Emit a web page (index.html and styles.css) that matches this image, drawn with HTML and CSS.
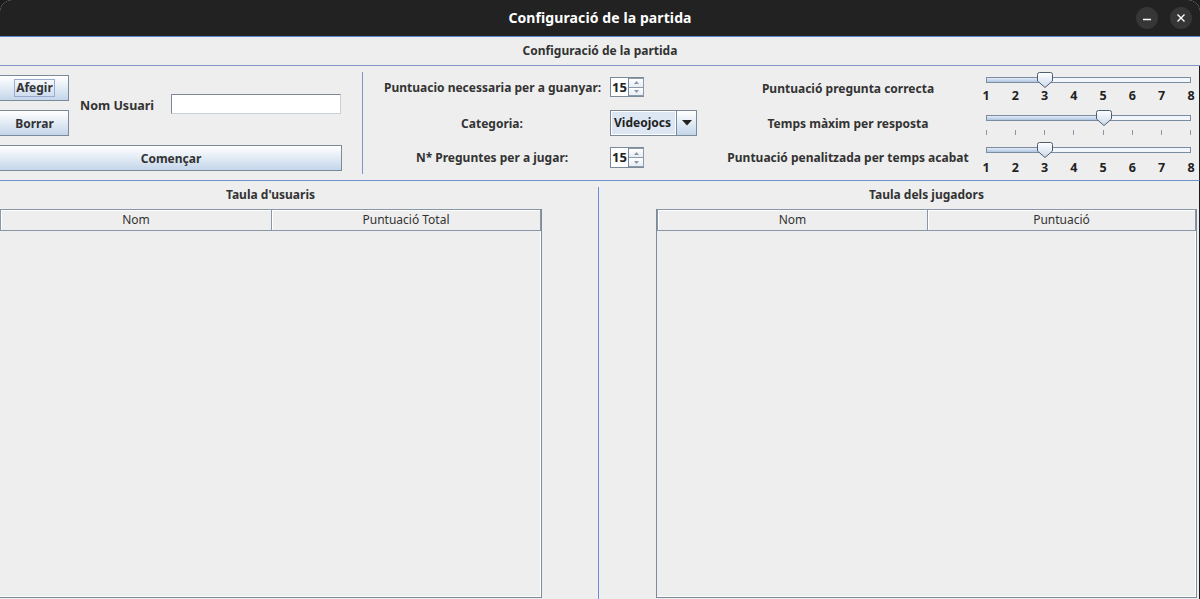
FILE: index.html
```html
<!DOCTYPE html>
<html lang="ca">
<head>
<meta charset="utf-8">
<title>Configuració de la partida</title>
<link rel="stylesheet" href="styles.css">
</head>
<body>
<div class="window">
  <header class="titlebar">
    <span></span>
    <span class="title">Configuració de la partida</span>
    <div class="wctrls">
      <span class="wbtn"><svg width="10" height="10" viewBox="0 0 10 10"><path d="M1 6.5h8" stroke="#fff" stroke-width="1.4"/></svg></span>
      <span class="wbtn"><svg width="10" height="10" viewBox="0 0 10 10"><path d="M1.5 1.5l7 7M8.5 1.5l-7 7" stroke="#fff" stroke-width="1.4"/></svg></span>
    </div>
  </header>
  <div class="frame">
    <div class="caption">Configuració de la partida</div>
    <div class="config">
      <div class="user-panel">
        <button class="btn"><span class="focus-ring">Afegir</span></button>
        <button class="btn">Borrar</button>
        <span class="nom">Nom Usuari</span>
        <span class="field"></span>
        <button class="btn wide">Començar</button>
      </div>
      <div class="vsep"></div>
      <div class="game-panel">
        <div class="grow r1">
          <span class="glabel">Puntuacio necessaria per a guanyar:</span>
          <span class="spinner"><span class="sp-text">15</span><span class="sp-btns"><span class="sp-b"><svg width="5" height="3" viewBox="0 0 5 3"><path d="M0 3L2.5 0L5 3z" fill="#8a95a3"/></svg></span><span class="sp-b"><svg width="5" height="3" viewBox="0 0 5 3"><path d="M0 0L2.5 3L5 0z" fill="#8a95a3"/></svg></span></span></span>
        </div>
        <div class="grow r2">
          <span class="glabel">Categoria:</span>
          <span class="combo"><span class="combo-text">Videojocs</span><span class="combo-btn"><svg width="10" height="6" viewBox="0 0 10 6"><path d="M0 0h10L5 5.5z" fill="#222"/></svg></span></span>
        </div>
        <div class="grow r3">
          <span class="glabel">N* Preguntes per a jugar:</span>
          <span class="spinner s2"><span class="sp-text">15</span><span class="sp-btns"><span class="sp-b"><svg width="5" height="3" viewBox="0 0 5 3"><path d="M0 3L2.5 0L5 3z" fill="#8a95a3"/></svg></span><span class="sp-b"><svg width="5" height="3" viewBox="0 0 5 3"><path d="M0 0L2.5 3L5 0z" fill="#8a95a3"/></svg></span></span></span>
        </div>
      </div>
      <div class="slider-panel">
        <div class="srow sr1">
          <span class="slabel">Puntuació pregunta correcta</span>
          <div class="slider">
            <div class="track"><div class="fill" style="width:58px"></div></div>
            <svg class="thumb" style="left:51px" width="16" height="16" viewBox="0 0 16 16"><defs><linearGradient id="tg1" x1="0" y1="0" x2="0" y2="1"><stop offset="0" stop-color="#ffffff"/><stop offset="1" stop-color="#c9d9ec"/></linearGradient></defs><path d="M0.5 2.5Q0.5 0.5 2.5 0.5H13.5Q15.5 0.5 15.5 2.5V9L8 15.5L0.5 9Z" fill="url(#tg1)" stroke="#4f5d6e"/></svg>
            <div class="nums"><span>1</span><span>2</span><span>3</span><span>4</span><span>5</span><span>6</span><span>7</span><span>8</span></div>
          </div>
        </div>
        <div class="srow sr2">
          <span class="slabel">Temps màxim per resposta</span>
          <div class="slider">
            <div class="track"><div class="fill" style="width:117px"></div></div>
            <svg class="thumb" style="left:110px" width="16" height="16" viewBox="0 0 16 16"><defs><linearGradient id="tg2" x1="0" y1="0" x2="0" y2="1"><stop offset="0" stop-color="#ffffff"/><stop offset="1" stop-color="#c9d9ec"/></linearGradient></defs><path d="M0.5 2.5Q0.5 0.5 2.5 0.5H13.5Q15.5 0.5 15.5 2.5V9L8 15.5L0.5 9Z" fill="url(#tg2)" stroke="#4f5d6e"/></svg>
            <div class="ticks"><i></i><i></i><i></i><i></i><i></i><i></i><i></i><i></i></div>
          </div>
        </div>
        <div class="srow sr3">
          <span class="slabel">Puntuació penalitzada per temps acabat</span>
          <div class="slider">
            <div class="track"><div class="fill" style="width:58px"></div></div>
            <svg class="thumb" style="left:51px" width="16" height="16" viewBox="0 0 16 16"><defs><linearGradient id="tg3" x1="0" y1="0" x2="0" y2="1"><stop offset="0" stop-color="#ffffff"/><stop offset="1" stop-color="#c9d9ec"/></linearGradient></defs><path d="M0.5 2.5Q0.5 0.5 2.5 0.5H13.5Q15.5 0.5 15.5 2.5V9L8 15.5L0.5 9Z" fill="url(#tg3)" stroke="#4f5d6e"/></svg>
            <div class="nums"><span>1</span><span>2</span><span>3</span><span>4</span><span>5</span><span>6</span><span>7</span><span>8</span></div>
          </div>
        </div>
      </div>
    </div>
    <div class="tables">
      <section class="tpane left">
        <div class="ttitle">Taula d'usuaris</div>
        <div class="table">
          <div class="thead"><span class="th">Nom</span><span class="th">Puntuació Total</span></div>
          <div class="tbody"></div>
        </div>
      </section>
      <div class="vline"></div>
      <section class="tpane right">
        <div class="ttitle">Taula dels jugadors</div>
        <div class="table">
          <div class="thead"><span class="th">Nom</span><span class="th">Puntuació</span></div>
          <div class="tbody"></div>
        </div>
      </section>
    </div>
  </div>
</div>
</body>
</html>
```
FILE: styles.css
```css
* { box-sizing: border-box; }
html, body { margin: 0; padding: 0; }
body {
  width: 1200px;
  height: 599px;
  overflow: hidden;
  background: #1c1c1c;
  font-family: "Noto Sans", "DejaVu Sans", sans-serif;
  font-size: 12px;
  color: #333333;
}
.window {
  width: 1200px;
  height: 599px;
  display: flex;
  flex-direction: column;
  border-radius: 12px 12px 0 0;
  overflow: hidden;
  background: #eeeeee;
}
.titlebar {
  height: 37px;
  flex: none;
  background: #222222;
  border-bottom: 1px solid #5f86d3;
  display: grid;
  grid-template-columns: 1fr auto 1fr;
  align-items: center;
  padding-bottom: 1px;
}
.title {
  color: #ffffff;
  font-weight: bold;
  font-size: 14px;
  letter-spacing: 0.1px;
}
.wctrls {
  justify-self: end;
  display: flex;
  gap: 12px;
  padding-right: 8px;
}
.wbtn {
  width: 22px;
  height: 22px;
  border-radius: 50%;
  background: #363636;
  display: flex;
  align-items: center;
  justify-content: center;
}
.frame {
  flex: 1;
  display: flex;
  flex-direction: column;
  min-height: 0;
}
.caption {
  height: 29px;
  flex: none;
  line-height: 28px;
  text-align: center;
  font-weight: bold;
  border-bottom: 1px solid #7f95c8;
}
.config {
  height: 115px;
  flex: none;
  display: flex;
  border-bottom: 1px solid #6f8fd0;
  border-right: 1px solid #1a1a1a;
}
.user-panel {
  margin-left: -10px;
  width: 352px;
  flex: none;
  padding-top: 9px;
  display: grid;
  grid-template-columns: 79px 102px 171px;
  grid-template-rows: 26px 26px 26px;
  row-gap: 9px;
}
.btn {
  font-family: inherit;
  font-size: 12px;
  font-weight: bold;
  color: #333333;
  border: 1px solid #7a8a99;
  background: linear-gradient(#ffffff 0%, #eef3f9 30%, #c4d6ea 100%);
  padding: 0;
  margin: 0;
  display: flex;
  align-items: center;
  justify-content: center;
  padding-left: 10px;
}
.focus-ring {
  border: 1px solid #9aaccd;
  padding: 0 1px;
  line-height: 16px;
}
.btn.wide {
  grid-column: 1 / 4;
}
.nom {
  grid-row: 1 / 3;
  grid-column: 2;
  align-self: center;
  padding-left: 11px;
  font-weight: bold;
  font-size: 12.5px;
}
.field {
  grid-row: 1 / 3;
  grid-column: 3;
  align-self: center;
  height: 20px;
  width: 170px;
  margin-bottom: 3px;
  background: #ffffff;
  border: 1px solid #7a8a99;
  border-right-color: #c8d0d8;
  border-bottom-color: #c8d0d8;
}
.vsep {
  width: 1px;
  flex: none;
  margin-left: 20px;
  margin-top: 6px;
  height: 102px;
  background: #7f95c8;
}
.game-panel {
  flex: none;
  padding-left: 21px;
  padding-top: 11px;
  display: flex;
  flex-direction: column;
}
.grow {
  display: flex;
  align-items: center;
  gap: 10px;
}
.grow.r1 { height: 20px; }
.grow.r2 { height: 26px; margin-top: 13px; }
.grow.r3 { height: 21px; margin-top: 11px; }
.glabel {
  width: 216px;
  text-align: center;
  font-weight: bold;
  white-space: nowrap;
}
.spinner {
  width: 34px;
  height: 20px;
  display: flex;
  border: 1px solid #7a8a99;
  border-right: none;
  background: #ffffff;
}
.spinner.s2 { height: 21px; }
.sp-text {
  width: 17px;
  font-weight: bold;
  font-size: 13px;
  line-height: 18px;
  padding-left: 1px;
  color: #222;
}
.sp-btns {
  flex: 1;
  display: flex;
  flex-direction: column;
  border-left: 1px solid #7a8a99;
}
.sp-b {
  flex: 1;
  display: flex;
  align-items: center;
  justify-content: center;
  background: linear-gradient(#ffffff, #e6edf5);
  border: 1px solid #8d9aa8;
  border-left: none;
}
.sp-b + .sp-b { border-top: none; }
.combo {
  width: 87px;
  height: 26px;
  display: flex;
  border: 1px solid #7a8a99;
}
.combo-text {
  flex: 1;
  background: #dde7f3;
  border: 1px solid #ffffff;
  font-weight: bold;
  font-size: 12px;
  line-height: 22px;
  padding-left: 2px;
  color: #222;
}
.combo-btn {
  width: 20px;
  display: flex;
  align-items: center;
  justify-content: center;
  border-left: 1px solid #7a8a99;
  background: linear-gradient(#ffffff 0%, #eef3f9 30%, #c4d6ea 100%);
}
.slider-panel {
  flex: none;
  margin-left: 23px;
  padding-top: 6px;
  display: flex;
  flex-direction: column;
}
.srow {
  display: flex;
  align-items: flex-start;
  gap: 10px;
}
.sr1 { height: 38px; }
.sr2 { height: 32px; }
.slabel {
  width: 256px;
  text-align: center;
  font-weight: bold;
  white-space: nowrap;
  line-height: 16px;
}
.sr1 .slabel { padding-top: 9px; }
.sr2 .slabel { padding-top: 6px; }
.sr3 .slabel { padding-top: 8px; }
.slider {
  position: relative;
  width: 205px;
  padding-top: 5px;
}
.track {
  height: 6px;
  border: 1px solid #7b8ca3;
  background: #f2f5f9;
  overflow: hidden;
}
.fill {
  height: 100%;
  background: linear-gradient(#e4ecf6, #b0c5e0);
}
.thumb {
  position: absolute;
  top: 0;
}
.nums {
  display: grid;
  grid-template-columns: repeat(8, 29.286px);
  margin-left: -14.643px;
  margin-top: 5px;
  font-weight: bold;
  font-size: 12.5px;
  line-height: 16px;
  text-align: center;
  color: #222;
}
.sr3 .nums { margin-top: 7px; }
.ticks {
  display: grid;
  grid-template-columns: repeat(8, 29.286px);
  margin-left: -14.643px;
  margin-top: 9px;
  height: 5px;
}
.ticks i {
  justify-self: center;
  width: 1px;
  height: 5px;
  background: #8a96a6;
}
.tables {
  flex: 1;
  display: flex;
  min-height: 0;
  border-right: 1px solid #1a1a1a;
}
.tpane {
  display: flex;
  flex-direction: column;
  padding-top: 6px;
}
.tpane.left {
  width: 599px;
  flex: none;
  margin-left: -1px;
}
.tpane.right {
  flex: 1;
  padding-left: 57px;
  padding-right: 2px;
}
.ttitle {
  width: 543px;
  text-align: center;
  font-weight: bold;
  line-height: 16px;
  margin-bottom: 6px;
}
.tpane.right .ttitle { width: 541px; }
.table {
  width: 543px;
  flex: 1;
  display: flex;
  flex-direction: column;
  border: 1px solid #7d8a99;
  border-top: none;
  margin-bottom: 1px;
  box-shadow: inset -1px -1px 0 #ffffff;
}
.tpane.right .table { width: 541px; }
.thead {
  height: 22px;
  display: grid;
  grid-template-columns: 272px 1fr;
}
.tpane.right .thead { grid-template-columns: 271px 1fr; }
.th {
  border: 1px solid #8797a8;
  border-left: none;
  box-shadow: inset 1px 1px 0 #ffffff;
  text-align: center;
  line-height: 20px;
  font-size: 12px;
  color: #333;
  background: #eeeeee;
}
.th:first-child { border-left: 1px solid #8797a8; }
.tbody {
  flex: 1;
}
.vline {
  width: 1px;
  flex: none;
  margin-top: 6px;
  background: #6b8fd6;
}
```
